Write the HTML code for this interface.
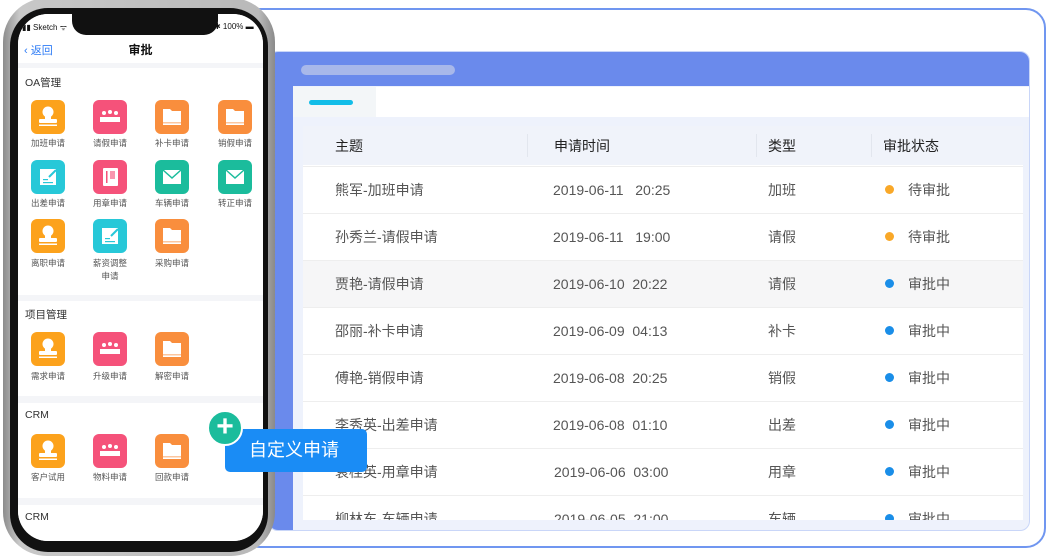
<!DOCTYPE html>
<html><head><meta charset="utf-8"><style>
*{margin:0;padding:0;box-sizing:border-box}
body{width:1048px;height:556px;position:relative;overflow:hidden;background:#fff;font-family:"Liberation Sans","Noto Sans CJK SC",sans-serif}
.abs{position:absolute}
.outer{left:240px;top:8px;width:806px;height:540px;border:2px solid #7096f0;border-radius:20px;background:#fff}
.win{left:268px;top:51px;width:762px;height:480px;border-radius:10px;background:#eef2fc;border:1px solid #c9d6f8;overflow:hidden}
.top{left:0;top:0;width:100%;height:34px;background:#6a8aec}
.pill{left:32px;top:13px;width:154px;height:10px;border-radius:5px;background:#a8b8ea}
.side{left:0;top:34px;width:24px;height:446px;background:#6a8aec}
.tabbar{left:24px;top:35px;width:738px;height:30px;background:#fff}
.tab{left:24px;top:35px;width:83px;height:30px;background:#f3f6f8}
.cy{left:40px;top:48px;width:44px;height:5px;border-radius:3px;background:#12bde8}
.tbl{left:34px;top:74px;width:720px;height:394px;background:#fff;overflow:hidden}
.hd{position:absolute;left:0;top:0;width:720px;height:39px;background:#f0f3fa;font-size:14px;color:#222}
.row{position:absolute;left:0;width:720px;height:47px;border-top:1px solid #eee;font-size:14px;color:#555}
.c{position:absolute;top:50%;transform:translateY(-50%);white-space:nowrap}
.dot{position:absolute;top:50%;width:9px;height:9px;border-radius:50%;margin-top:-5px}
.sep{position:absolute;top:8px;width:1px;height:23px;background:#e2e6ee}
.phone{left:3px;top:-2px;width:272px;height:558px;border-radius:44px;background:linear-gradient(90deg,#8c8c8c,#c8c8c8 6%,#b9b9b9 94%,#8a8a8a);}
.bez{left:10px;top:8px;width:258px;height:544px;border-radius:38px;background:#111}
.scr{left:18px;top:14px;width:245px;height:527px;border-radius:30px;background:#f4f5f8;overflow:hidden}
.notch{left:54px;top:0;width:146px;height:21px;background:#111;border-radius:0 0 14px 14px}
.sec{position:absolute;left:0;width:245px;background:#fff}
.st{position:absolute;left:7px;font-size:10.5px;color:#333}
.ic{position:absolute;width:34px;height:34px;border-radius:6px}
.ic svg{position:absolute;left:0;top:0}
.lb{position:absolute;width:60px;text-align:center;font-size:8.5px;color:#555;line-height:13px}
.o{background:#fca21c}.p{background:#f5527a}.f{background:#f98e3d}.cn{background:#27c8d8}.g{background:#1bbc9c}
</style></head><body>
<svg width="0" height="0" style="position:absolute">
<defs>
<symbol id="stamp" viewBox="0 0 34 34"><circle cx="17" cy="12" r="5.5" fill="#fff"/><rect x="14" y="15" width="6" height="5" fill="#fff"/><rect x="8" y="19" width="18" height="4" rx="1" fill="#fff"/><rect x="8" y="24.5" width="18" height="1.5" fill="#fff"/></symbol>
<symbol id="ppl" viewBox="0 0 34 34"><circle cx="11" cy="13" r="2" fill="#fff"/><circle cx="17" cy="12" r="2" fill="#fff"/><circle cx="23" cy="13" r="2" fill="#fff"/><path d="M7 17h20v5H7z" fill="#fff"/></symbol>
<symbol id="fold" viewBox="0 0 34 34"><path d="M8 9h7l2 2h9v14H8z" fill="#fff"/><rect x="8" y="22" width="18" height="1.5" fill="#f98e3d" opacity=".5"/></symbol>
<symbol id="mail" viewBox="0 0 34 34"><rect x="8" y="10" width="18" height="14" fill="#fff"/><path d="M8 10l9 8 9-8" fill="none" stroke="#1bbc9c" stroke-width="1.5"/></symbol>
<symbol id="doc" viewBox="0 0 34 34"><rect x="9" y="9" width="16" height="16" fill="#fff"/><rect x="12" y="19" width="5" height="1.2" fill="#27c8d8"/><rect x="12" y="22" width="10" height="1.2" fill="#27c8d8"/><path d="M18 17l7-7" stroke="#27c8d8" stroke-width="2"/></symbol>
<symbol id="book" viewBox="0 0 34 34"><rect x="10" y="8" width="15" height="18" rx="1" fill="#fff"/><rect x="13" y="11" width="1.5" height="12" fill="#f5527a"/><rect x="17" y="11" width="5" height="8" fill="#f5527a" opacity=".6"/></symbol>
</defs></svg>
<div class="abs outer"></div>
<div class="abs win">
 <div class="abs top"><div class="abs pill"></div></div>
 <div class="abs side"></div>
 <div class="abs tabbar"></div><div class="abs tab"></div><div class="abs cy"></div>
 <div class="abs tbl">
  <div class="hd">
   <div class="c" style="left:32px">主题</div><div class="sep" style="left:224px"></div>
   <div class="c" style="left:251px">申请时间</div><div class="sep" style="left:453px"></div>
   <div class="c" style="left:465px">类型</div><div class="sep" style="left:568px"></div>
   <div class="c" style="left:580px">审批状态</div>
  </div>
  <div class="row" style="top:40px"><div class="c" style="left:32px">熊军-加班申请</div><div class="c" style="left:250px">2019-06-11&nbsp;&nbsp;&nbsp;20:25</div><div class="c" style="left:465px">加班</div><div class="dot" style="left:582px;background:#f9a828"></div><div class="c" style="left:605px">待审批</div></div>
  <div class="row" style="top:87px"><div class="c" style="left:32px">孙秀兰-请假申请</div><div class="c" style="left:250px">2019-06-11&nbsp;&nbsp;&nbsp;19:00</div><div class="c" style="left:465px">请假</div><div class="dot" style="left:582px;background:#f9a828"></div><div class="c" style="left:605px">待审批</div></div>
  <div class="row" style="top:134px;background:#f6f6f7"><div class="c" style="left:32px">贾艳-请假申请</div><div class="c" style="left:250px">2019-06-10&nbsp;&nbsp;20:22</div><div class="c" style="left:465px">请假</div><div class="dot" style="left:582px;background:#1a8ee8"></div><div class="c" style="left:605px">审批中</div></div>
  <div class="row" style="top:181px"><div class="c" style="left:32px">邵丽-补卡申请</div><div class="c" style="left:250px">2019-06-09&nbsp;&nbsp;04:13</div><div class="c" style="left:465px">补卡</div><div class="dot" style="left:582px;background:#1a8ee8"></div><div class="c" style="left:605px">审批中</div></div>
  <div class="row" style="top:228px"><div class="c" style="left:32px">傅艳-销假申请</div><div class="c" style="left:250px">2019-06-08&nbsp;&nbsp;20:25</div><div class="c" style="left:465px">销假</div><div class="dot" style="left:582px;background:#1a8ee8"></div><div class="c" style="left:605px">审批中</div></div>
  <div class="row" style="top:275px"><div class="c" style="left:32px">李秀英-出差申请</div><div class="c" style="left:250px">2019-06-08&nbsp;&nbsp;01:10</div><div class="c" style="left:465px">出差</div><div class="dot" style="left:582px;background:#1a8ee8"></div><div class="c" style="left:605px">审批中</div></div>
  <div class="row" style="top:322px"><div class="c" style="left:32px">袁桂英-用章申请</div><div class="c" style="left:251px">2019-06-06&nbsp;&nbsp;03:00</div><div class="c" style="left:465px">用章</div><div class="dot" style="left:582px;background:#1a8ee8"></div><div class="c" style="left:605px">审批中</div></div>
  <div class="row" style="top:369px"><div class="c" style="left:32px">柳林东-车辆申请</div><div class="c" style="left:251px">2019-06-05&nbsp;&nbsp;21:00</div><div class="c" style="left:465px">车辆</div><div class="dot" style="left:582px;background:#1a8ee8"></div><div class="c" style="left:605px">审批中</div></div>
 </div>
</div>

<div class="abs phone"></div>
<div class="abs bez"></div>
<div class="abs scr">
 <div class="sec" style="top:0;height:49px"></div>
 <div class="abs notch"></div>
 <div class="abs" style="left:4px;top:8px;font-size:8px;color:#111">▮▮ Sketch ᯤ</div>
 <div class="abs" style="left:196px;top:8px;font-size:8px;color:#111">✱ 100% ▬</div>
 <div class="abs" style="left:6px;top:28px;font-size:11px;color:#2e7cf6">‹ 返回</div>
 <div class="abs" style="left:0;width:245px;text-align:center;top:27px;font-size:12px;font-weight:bold;color:#111">审批</div>

 <div class="sec" style="top:54px;height:227px"><div class="st" style="top:7px">OA管理</div></div>
 <div class="sec" style="top:287px;height:95px"><div class="st" style="top:6px">项目管理</div></div>
 <div class="sec" style="top:389px;height:95px"><div class="st" style="top:6px">CRM</div></div>
 <div class="sec" style="top:491px;height:40px"><div class="st" style="top:6px">CRM</div></div>

 <div class="ic o" style="left:13px;top:86px"><svg width="34" height="34"><use href="#stamp"/></svg></div><div class="lb" style="left:0;top:123px">加班申请</div>
 <div class="ic p" style="left:75px;top:86px"><svg width="34" height="34"><use href="#ppl"/></svg></div><div class="lb" style="left:62px;top:123px">请假申请</div>
 <div class="ic f" style="left:137px;top:86px"><svg width="34" height="34"><use href="#fold"/></svg></div><div class="lb" style="left:124px;top:123px">补卡申请</div>
 <div class="ic f" style="left:200px;top:86px"><svg width="34" height="34"><use href="#fold"/></svg></div><div class="lb" style="left:187px;top:123px">销假申请</div>
 <div class="ic cn" style="left:13px;top:146px"><svg width="34" height="34"><use href="#doc"/></svg></div><div class="lb" style="left:0;top:183px">出差申请</div>
 <div class="ic p" style="left:75px;top:146px"><svg width="34" height="34"><use href="#book"/></svg></div><div class="lb" style="left:62px;top:183px">用章申请</div>
 <div class="ic g" style="left:137px;top:146px"><svg width="34" height="34"><use href="#mail"/></svg></div><div class="lb" style="left:124px;top:183px">车辆申请</div>
 <div class="ic g" style="left:200px;top:146px"><svg width="34" height="34"><use href="#mail"/></svg></div><div class="lb" style="left:187px;top:183px">转正申请</div>
 <div class="ic o" style="left:13px;top:205px"><svg width="34" height="34"><use href="#stamp"/></svg></div><div class="lb" style="left:0;top:243px">离职申请</div>
 <div class="ic cn" style="left:75px;top:205px"><svg width="34" height="34"><use href="#doc"/></svg></div><div class="lb" style="left:62px;top:243px">薪资调整<br>申请</div>
 <div class="ic f" style="left:137px;top:205px"><svg width="34" height="34"><use href="#fold"/></svg></div><div class="lb" style="left:124px;top:243px">采购申请</div>

 <div class="ic o" style="left:13px;top:318px"><svg width="34" height="34"><use href="#stamp"/></svg></div><div class="lb" style="left:0;top:356px">需求申请</div>
 <div class="ic p" style="left:75px;top:318px"><svg width="34" height="34"><use href="#ppl"/></svg></div><div class="lb" style="left:62px;top:356px">升级申请</div>
 <div class="ic f" style="left:137px;top:318px"><svg width="34" height="34"><use href="#fold"/></svg></div><div class="lb" style="left:124px;top:356px">解密申请</div>

 <div class="ic o" style="left:13px;top:420px"><svg width="34" height="34"><use href="#stamp"/></svg></div><div class="lb" style="left:0;top:457px">客户试用</div>
 <div class="ic p" style="left:75px;top:420px"><svg width="34" height="34"><use href="#ppl"/></svg></div><div class="lb" style="left:62px;top:457px">物料申请</div>
 <div class="ic f" style="left:137px;top:420px"><svg width="34" height="34"><use href="#fold"/></svg></div><div class="lb" style="left:124px;top:457px">回款申请</div>
</div>

<div class="abs" style="left:225px;top:429px;width:142px;height:43px;background:#1a8cf5;border-radius:5px;color:#fff;font-size:18px;line-height:43px;padding-left:24px">自定义申请</div>
<div class="abs" style="left:207px;top:410px;width:36px;height:36px;border-radius:50%;background:#1bbc9c;border:2px solid #fff;color:#fff;font-size:30px;line-height:30px;text-align:center;font-weight:bold">+</div>
</body></html>
